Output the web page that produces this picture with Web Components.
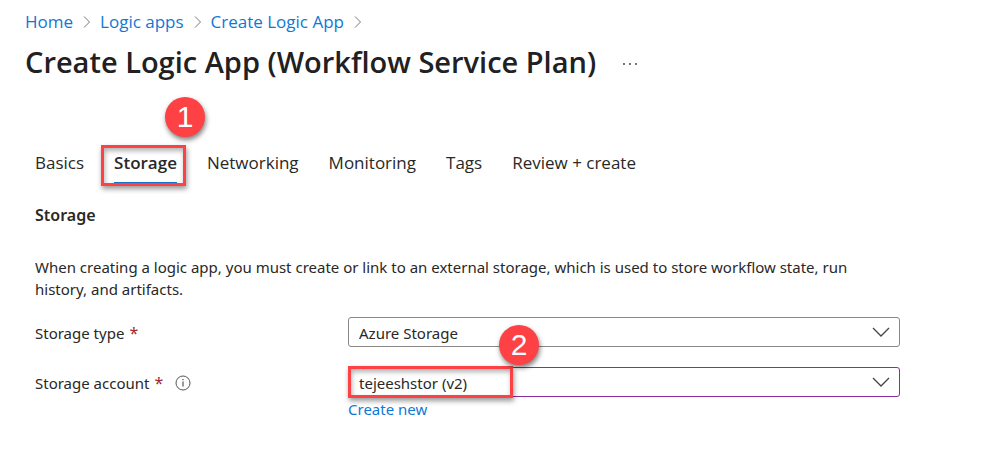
<!DOCTYPE html>
<html lang="en">
<head>
<meta charset="utf-8">
<title>Create Logic App</title>
<style>
body { margin: 0; background: #fff; color: #292827; font-family: "Noto Sans", "Open Sans", sans-serif; font-size: 15px; line-height: 22px; }
</style>
</head>
<body>
<create-page></create-page>
<script>
const define = (name, html, setup) => customElements.define(name, class extends HTMLElement {
  connectedCallback() {
    if (this.shadowRoot) return;
    const root = this.attachShadow({ mode: "open" });
    const t = document.createElement("template");
    t.innerHTML = html;
    root.append(t.content.cloneNode(true));
    if (setup) setup(this, root);
  }
});

define("step-badge", `
<style>
:host { position: absolute; z-index: 3; display: grid; place-items: center; width: 40px; height: 40px; border-radius: 50%; background: #fd4144; color: #fff; font: 30px/40px "Liberation Sans", Arial, sans-serif; box-shadow: 1px 3px 5px rgba(0,0,0,.5); }
</style><slot></slot>`);

define("highlight-box", `
<style>
:host { position: absolute; z-index: 2; box-sizing: border-box; border: 3px solid #fd4144; pointer-events: none; box-shadow: 1px 3px 5px rgba(0,0,0,.4), inset 1px 3px 5px rgba(0,0,0,.3); }
</style>`);

define("crumb-link", `
<style>
:host { display: flex; align-items: center; gap: 10px; }
a { color: #0f78d4; text-decoration: none; font: 17px/24px "Open Sans", "Noto Sans", sans-serif; white-space: nowrap; }
svg { width: 8px; height: 12px; margin-right: 9px; }
</style>
<a href="#"><slot></slot></a>
<svg viewBox="0 0 8 12" fill="none" stroke="#777" aria-hidden="true"><path d="M1 .5 6.5 6 1 11.5"/></svg>`);

define("page-header", `
<style>
:host { display: block; padding: 10px 25px 0; }
nav { display: flex; }
.title { display: flex; align-items: center; gap: 26px; margin-top: 7px; }
h1 { margin: 0; color: #212023; font: 600 29px/42px "Open Sans", "Noto Sans", sans-serif; white-space: nowrap; }
button { display: flex; padding: 0; border: 0; background: none; }
svg { width: 16px; height: 16px; }
</style>
<nav aria-label="Breadcrumb">
<crumb-link>Home</crumb-link><crumb-link>Logic apps</crumb-link><crumb-link>Create Logic App</crumb-link>
</nav>
<div class="title"><h1><slot></slot></h1>
<button type="button" aria-label="More"><svg viewBox="0 0 16 16" fill="#333"><circle cx="2" cy="10" r=".9"/><circle cx="8" cy="10" r=".9"/><circle cx="14" cy="10" r=".9"/></svg></button></div>`);

define("tab-item", `
<style>
:host { display: block; position: relative; }
button { display: block; padding: 0 0 7px; border: 0; background: none; color: inherit; font: 17px/24px "Open Sans", "Noto Sans", sans-serif; white-space: nowrap; }
:host([selected]) button { font-weight: 600; border-bottom: 2px solid #0f78d4; }
highlight-box { inset: -6px -9px -2px -13px; }
step-badge { left: 51px; top: -54px; }
</style>
<button type="button" role="tab"><slot></slot></button>`, (host, root) => {
  const on = host.hasAttribute("selected");
  root.querySelector("button").setAttribute("aria-selected", on);
  if (on) {
    const badge = document.createElement("step-badge");
    badge.textContent = "1";
    root.append(document.createElement("highlight-box"), badge);
  }
});

define("tab-bar", `
<style>:host { display: flex; align-items: flex-start; gap: 30px; }</style><slot></slot>`);

define("select-field", `
<style>
:host { display: grid; grid-template-columns: 313px minmax(0, 1fr); align-items: start; }
.label { display: flex; box-sizing: border-box; align-items: center; height: 30px; gap: 5px; padding-top: 2px; white-space: nowrap; }
.label span { color: #a4262c; font-size: 16px; }
.label svg { width: 16px; height: 16px; margin-left: 7px; }
.control { position: relative; display: grid; align-items: center; }
select, .arrow { grid-area: 1 / 1; }
select { appearance: none; box-sizing: border-box; width: 100%; height: 30px; margin: 0; padding: 2px 40px 0 10px; border: 1px solid #8a8886; border-radius: 3px; background: #fff; color: inherit; font: 15px/22px "Noto Sans", "Open Sans", sans-serif; }
:host([active]) select { border-color: #8a2da5; }
.arrow { justify-self: end; width: 18px; height: 10px; margin-right: 10px; pointer-events: none; }
highlight-box { left: 0; top: -1px; width: 165px; height: 32px; }
step-badge { left: 151px; top: -42px; }
</style>
<div class="label"><label for="s"></label><span>*</span></div>
<div><div class="control"><select id="s"><option></option></select>
<svg class="arrow" viewBox="0 0 18 10" fill="none" stroke="#444" stroke-width="1.3" aria-hidden="true"><path d="M1 1 9 9 17 1"/></svg></div>
<slot></slot></div>`, (host, root) => {
  root.querySelector("label").textContent = host.getAttribute("label");
  root.querySelector("option").textContent = host.getAttribute("value");
  if (host.hasAttribute("info")) root.querySelector(".label").insertAdjacentHTML("beforeend",
    `<svg viewBox="0 0 16 16" fill="none" stroke="#555" role="img" aria-label="Information"><circle cx="8" cy="8" r="7"/><path d="M8 6.5v5" stroke-width="1.2"/><path d="M8 4v1.3" stroke-width="1.2"/></svg>`);
  if (host.hasAttribute("active")) {
    const badge = document.createElement("step-badge");
    badge.textContent = "2";
    root.querySelector(".control").append(document.createElement("highlight-box"), badge);
  }
});

define("create-page", `
<style>
:host { display: block; }
main { max-width: 865px; padding: 68px 35px 40px; }
h2 { margin: 19px 0 0; font-size: 16px; line-height: 24px; font-weight: 600; }
p { max-width: 840px; margin: 29px 0 0; line-height: 22px; }
form { display: grid; gap: 20px; margin-top: 17px; }
.link { display: block; margin-top: 1px; color: #0f78d4; text-decoration: none; }
</style>
<page-header>Create Logic App (Workflow Service Plan)</page-header>
<main>
<tab-bar role="tablist"><tab-item>Basics</tab-item><tab-item selected>Storage</tab-item><tab-item>Networking</tab-item><tab-item>Monitoring</tab-item><tab-item>Tags</tab-item><tab-item>Review + create</tab-item></tab-bar>
<h2>Storage</h2>
<p>When creating a logic app, you must create or link to an external storage, which is used to store workflow state, run history, and artifacts.</p>
<form>
<select-field label="Storage type" value="Azure Storage"></select-field>
<select-field label="Storage account" value="tejeeshstor (v2)" info active><a class="link" href="#">Create new</a></select-field>
</form>
</main>`);
</script>
</body>
</html>
